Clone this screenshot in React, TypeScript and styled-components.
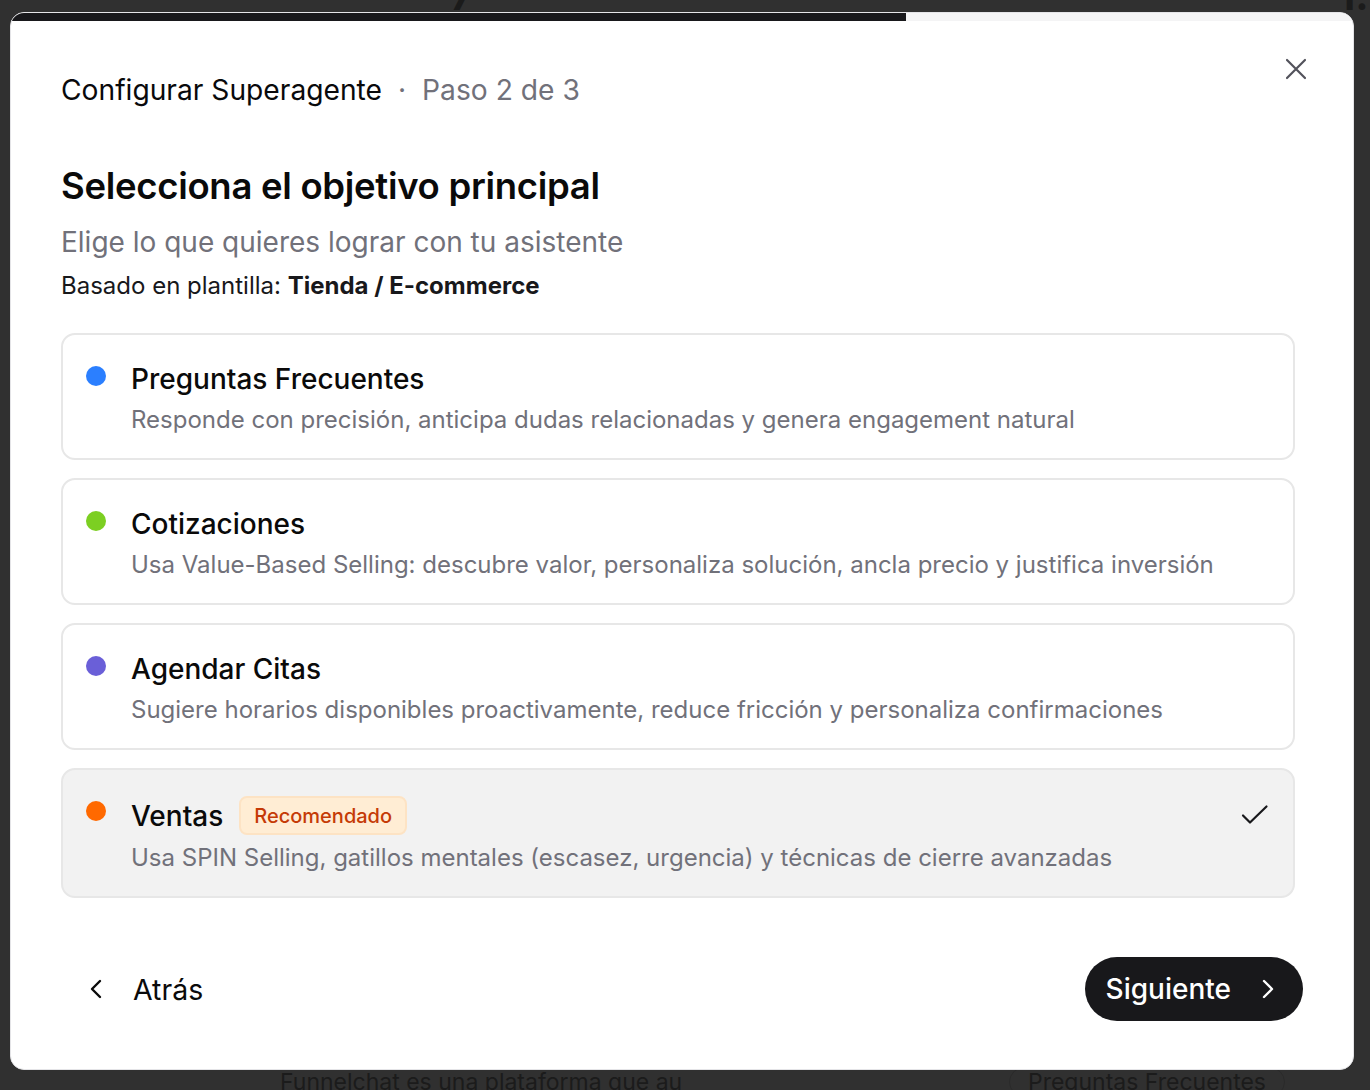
import React, { useState } from "react";
import styled, { createGlobalStyle } from "styled-components";

const Global = createGlobalStyle`
  * { box-sizing: border-box; }
  html, body { margin: 0; padding: 0; }
  body {
    background: #303030;
    font-family: Inter, "Noto Sans", "Liberation Sans", sans-serif;
    -webkit-font-smoothing: antialiased;
  }
`;

const Page = styled.div`
  position: relative;
  width: 1370px;
  height: 1090px;
  overflow: hidden;
  background: #303030;
`;

const BackdropContent = styled.div`
  display: grid;
  grid-template-rows: 12px 1fr 24px;
  height: 100%;
  color: #1b1b1b;
  font-family: Inter, sans-serif;
`;

const BackdropTop = styled.div`
  position: relative;
  font-size: 40px;
  font-weight: 700;
  line-height: 1;
`;

const BackdropGlyph = styled.span<{ $left: number }>`
  position: absolute;
  top: -24px;
  left: ${(p) => p.$left}px;
`;

const BackdropBottom = styled.div`
  grid-row: 3;
  display: flex;
  align-items: center;
  justify-content: space-between;
  padding: 0 85px 0 280px;
  font-size: 23px;
  margin-bottom: -8px;
`;

const BackdropPill = styled.span`
  border: 1px solid #2a2a2a;
  border-radius: 16px;
  padding: 0 18px;
`;

const Overlay = styled.div`
  position: absolute;
  inset: 0;
`;

const Modal = styled.div`
  position: absolute;
  left: 10px;
  top: 12px;
  width: 1344px;
  height: 1058px;
  background: #ffffff;
  border: 1px solid #e4e4e7;
  border-radius: 14px;
  overflow: hidden;
  display: flex;
  flex-direction: column;
  color: #0a0a0a;
`;

const Progress = styled.div`
  height: 8px;
  background: #f4f4f5;
  flex-shrink: 0;
`;

const ProgressFill = styled.div`
  height: 100%;
  background: #18181b;
`;

const CloseButton = styled.button`
  position: absolute;
  top: 36px;
  right: 37px;
  width: 40px;
  height: 40px;
  border: none;
  background: transparent;
  display: flex;
  align-items: center;
  justify-content: center;
  padding: 0;
  cursor: pointer;
  color: #52525b;
`;

const Body = styled.div`
  flex: 1;
  display: flex;
  flex-direction: column;
  padding: 51px 50px 48px 50px;
`;

const StepHeader = styled.div`
  display: flex;
  align-items: center;
  gap: 16px;
  font-size: 28.2px;
  line-height: 36px;
  font-weight: 400;
`;

const StepName = styled.span`
  color: #09090b;
`;

const StepMuted = styled.span`
  color: #71717a;
`;

const Title = styled.h1`
  margin: 56px 0 0;
  font-size: 36.5px;
  line-height: 44px;
  font-weight: 600;
  letter-spacing: -0.3px;
  color: #0a0a0a;
`;

const Subtitle = styled.p`
  margin: 16px 0 0;
  font-size: 28px;
  line-height: 36px;
  color: #71717a;
`;

const TemplateNote = styled.p`
  margin: 11px 0 0;
  font-size: 24px;
  line-height: 30px;
  color: #18181b;
  b {
    font-weight: 700;
  }
`;

const Options = styled.div`
  display: flex;
  flex-direction: column;
  gap: 18px;
  margin: 32px 8px 0 0;
`;

const Card = styled.button<{ $selected: boolean }>`
  display: flex;
  align-items: flex-start;
  gap: 25px;
  width: 100%;
  text-align: left;
  padding: 26px 24px 21px 23px;
  border: 2px solid #e7e7e7;
  border-radius: 14px;
  background: ${(p) => (p.$selected ? "#f2f2f2" : "#ffffff")};
  font-family: inherit;
  cursor: pointer;
`;

const Dot = styled.span<{ $color: string }>`
  flex-shrink: 0;
  width: 20px;
  height: 20px;
  border-radius: 50%;
  margin-top: 5px;
  background: ${(p) => p.$color};
`;

const CardText = styled.div`
  flex: 1;
  display: flex;
  flex-direction: column;
`;

const CardTitleRow = styled.div`
  display: flex;
  align-items: center;
  gap: 16px;
  min-height: 36px;
`;

const CardTitle = styled.span`
  font-size: 28px;
  line-height: 36px;
  font-weight: 500;
  color: #0a0a0a;
`;

const Badge = styled.span`
  display: inline-flex;
  align-items: center;
  height: 39px;
  padding: 0 13px;
  border-radius: 8px;
  background: #ffedd4;
  border: 2px solid #fde3c4;
  color: #c53a06;
  font-size: 20px;
  font-weight: 500;
`;

const CardDesc = styled.span`
  margin-top: 6px;
  font-size: 24px;
  line-height: 34px;
  color: #71717a;
`;

const Check = styled.span`
  align-self: flex-start;
  margin-top: 8px;
  display: flex;
  color: #18181b;
`;

const Footer = styled.div`
  margin-top: auto;
  display: flex;
  align-items: center;
  justify-content: space-between;
`;

const BackButton = styled.button`
  display: flex;
  align-items: center;
  gap: 30px;
  height: 64px;
  padding: 0 0 0 28px;
  border: none;
  background: transparent;
  font-family: inherit;
  font-size: 28.5px;
  color: #0a0a0a;
  cursor: pointer;
`;

const NextButton = styled.button`
  display: flex;
  align-items: center;
  gap: 30px;
  height: 64px;
  padding: 0 28px 0 21px;
  border: none;
  border-radius: 999px;
  background: #18181b;
  color: #ffffff;
  font-family: inherit;
  font-size: 28px;
  font-weight: 500;
  cursor: pointer;
`;

const options = [
  {
    id: "faq",
    color: "#2b7fff",
    title: "Preguntas Frecuentes",
    desc: "Responde con precisión, anticipa dudas relacionadas y genera engagement natural",
  },
  {
    id: "quotes",
    color: "#7ccf22",
    title: "Cotizaciones",
    desc: "Usa Value-Based Selling: descubre valor, personaliza solución, ancla precio y justifica inversión",
  },
  {
    id: "appointments",
    color: "#6a5fd8",
    title: "Agendar Citas",
    desc: "Sugiere horarios disponibles proactivamente, reduce fricción y personaliza confirmaciones",
  },
  {
    id: "sales",
    color: "#ff6900",
    title: "Ventas",
    desc: "Usa SPIN Selling, gatillos mentales (escasez, urgencia) y técnicas de cierre avanzadas",
    badge: "Recomendado",
  },
];

const XIcon = () => (
  <svg width="22" height="22" viewBox="0 0 22 22" fill="none" stroke="currentColor" strokeWidth="2.2" strokeLinecap="round">
    <path d="M2 2L20 20M20 2L2 20" />
  </svg>
);

const CheckIcon = () => (
  <svg width="28" height="22" viewBox="0 0 28 22" fill="none" stroke="currentColor" strokeWidth="2.2" strokeLinecap="round" strokeLinejoin="round">
    <path d="M2 11.5L9 18.5L25.5 2.5" />
  </svg>
);

const ChevronLeft = () => (
  <svg width="14" height="20" viewBox="0 0 14 20" fill="none" stroke="currentColor" strokeWidth="2.4" strokeLinecap="round" strokeLinejoin="round">
    <path d="M11 2L3 10L11 18" />
  </svg>
);

const ChevronRight = () => (
  <svg width="14" height="20" viewBox="0 0 14 20" fill="none" stroke="currentColor" strokeWidth="2.4" strokeLinecap="round" strokeLinejoin="round">
    <path d="M3 2L11 10L3 18" />
  </svg>
);

export default function App() {
  const [selected, setSelected] = useState("sales");
  const step = 2;
  const total = 3;
  return (
    <Page>
      <Global />
      <BackdropContent>
        <BackdropTop>
          <BackdropGlyph $left={450}>7</BackdropGlyph>
          <BackdropGlyph $left={1338}>1.</BackdropGlyph>
        </BackdropTop>
        <BackdropBottom>
          <span>Funnelchat es una plataforma que au</span>
          <BackdropPill>Preguntas Frecuentes</BackdropPill>
        </BackdropBottom>
      </BackdropContent>
      <Overlay>
        <Modal>
          <Progress>
            <ProgressFill style={{ width: `${(step / total) * 100}%` }} />
          </Progress>
          <CloseButton aria-label="Cerrar">
            <XIcon />
          </CloseButton>
          <Body>
            <StepHeader>
              <StepName>Configurar Superagente</StepName>
              <StepMuted>·</StepMuted>
              <StepMuted>
                Paso {step} de {total}
              </StepMuted>
            </StepHeader>
            <Title>Selecciona el objetivo principal</Title>
            <Subtitle>Elige lo que quieres lograr con tu asistente</Subtitle>
            <TemplateNote>
              Basado en plantilla: <b>Tienda / E-commerce</b>
            </TemplateNote>
            <Options>
              {options.map((o) => (
                <Card key={o.id} $selected={selected === o.id} onClick={() => setSelected(o.id)}>
                  <Dot $color={o.color} />
                  <CardText>
                    <CardTitleRow>
                      <CardTitle>{o.title}</CardTitle>
                      {o.badge && <Badge>{o.badge}</Badge>}
                    </CardTitleRow>
                    <CardDesc>{o.desc}</CardDesc>
                  </CardText>
                  {selected === o.id && (
                    <Check>
                      <CheckIcon />
                    </Check>
                  )}
                </Card>
              ))}
            </Options>
            <Footer>
              <BackButton>
                <ChevronLeft />
                Atrás
              </BackButton>
              <NextButton>
                Siguiente
                <ChevronRight />
              </NextButton>
            </Footer>
          </Body>
        </Modal>
      </Overlay>
    </Page>
  );
}
